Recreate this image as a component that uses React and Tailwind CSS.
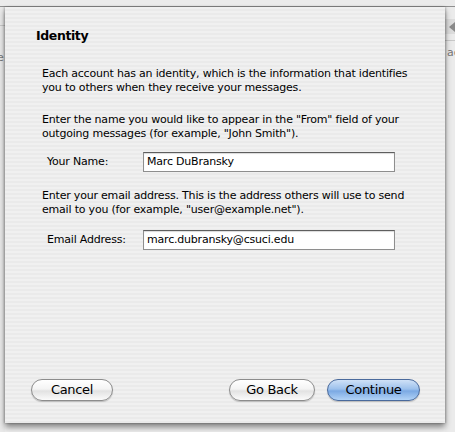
import React from "react";

const font = { fontFamily: '"Lucida Grande", "DejaVu Sans", sans-serif' };

function AquaButton({ label, primary, width }) {
  return (
    <button
      className={`h-[22px] rounded-full border text-[13px] leading-[20px] tracking-[-0.3px] text-black ${width} ${
        primary
          ? "border-[#4a6a9c] bg-[linear-gradient(#cfe1f7_0%,#9dc1ec_45%,#7ba9e3_55%,#b2d3f7_100%)]"
          : "border-[#8c8c8c] bg-[linear-gradient(#ffffff_0%,#f4f4f4_45%,#e2e2e2_55%,#fbfbfb_100%)]"
      } shadow-[0_1px_1px_rgba(0,0,0,0.2)]`}
    >
      {label}
    </button>
  );
}

function Field({ label, value }) {
  return (
    <div className="flex items-center pl-[42px] tracking-[-0.2px]">
      <span className="w-[96px] text-[11px]">{label}</span>
      <div className="h-[20px] w-[252px] border border-[#8e8e8e] border-t-[#5e5e5e] bg-white px-[3px] text-[11px] leading-[18px] shadow-[inset_0_1px_1px_rgba(0,0,0,0.15)]">
        {value}
      </div>
    </div>
  );
}

export default function App() {
  return (
    <div className="relative h-[432px] w-[455px] overflow-hidden bg-[#ececec] text-black" style={font}>
      {/* window title strip */}
      <div className="h-[7px] border-b border-[#8f8f8f] bg-[#ebebeb]" />

      <div className="flex">
        {/* window behind, left edge */}
        <div className="w-[5px] h-[425px] bg-[#e9e9e9] overflow-hidden">
          <div className="mt-[18px] h-px bg-[#c8c8c8]" />
          <div className="mt-[24px] -ml-[3px] text-[11px] text-[#777]">e</div>
        </div>

        {/* sheet */}
        <div className="relative z-10 flex h-[416px] w-[440px] flex-col bg-[repeating-linear-gradient(#f0f0f0_0px,#f0f0f0_2px,#eaeaea_2px,#eaeaea_4px)] pb-[22px] pt-[21px] shadow-[0_4px_6px_rgba(0,0,0,0.45),1px_0_2px_rgba(0,0,0,0.2),-1px_0_2px_rgba(0,0,0,0.2)]">
          <h1 className="pl-[31px] text-[12.5px] font-bold leading-[16px] tracking-[-0.4px]">Identity</h1>

          <p className="mt-[23px] pl-[37px] text-[11px] leading-[14px] tracking-[-0.2px]">
            Each account has an identity, which is the information that identifies
            <br />
            you to others when they receive your messages.
          </p>

          <p className="mt-[18px] pl-[37px] text-[11px] leading-[14px] tracking-[-0.2px]">
            Enter the name you would like to appear in the "From" field of your
            <br />
            outgoing messages (for example, "John Smith").
          </p>

          <div className="mt-[11px]">
            <Field label="Your Name:" value="Marc DuBransky" />
          </div>

          <p className="mt-[17px] pl-[37px] text-[11px] leading-[14px] tracking-[-0.2px]">
            Enter your email address. This is the address others will use to send
            <br />
            email to you (for example, "user@example.net").
          </p>

          <div className="mt-[13px]">
            <Field label="Email Address:" value="marc.dubransky@csuci.edu" />
          </div>

          <div className="mt-auto flex items-center pl-[26px]">
            <AquaButton label="Cancel" width="w-[82px]" />
            <div className="flex-1" />
            <AquaButton label="Go Back" width="w-[86px]" />
            <div className="w-[12px]" />
            <AquaButton label="Continue" primary width="w-[93px]" />
            <div className="w-[25px]" />
          </div>
        </div>

        {/* window behind, right edge */}
        <div className="w-[10px] h-[425px] bg-[#ebebeb] overflow-hidden">
          <div className="mt-[12px] h-[15px] w-[10px] bg-[#dcdcdc] flex items-center justify-end">
            <div className="h-0 w-0 border-y-[5px] border-r-[6px] border-y-transparent border-r-[#8a8a8a]" />
          </div>
          <div className="mt-[6px] h-px bg-[#c8c8c8]" />
          <div className="mt-[4px] ml-[2px] whitespace-nowrap text-[11px] text-[#777]">ac</div>
        </div>
      </div>
    </div>
  );
}
